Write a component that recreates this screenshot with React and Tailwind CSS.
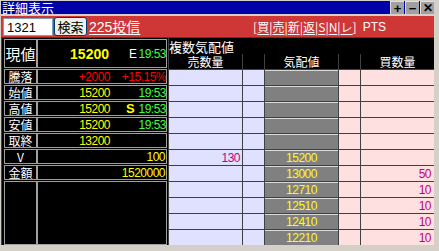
import React from "react";

function Label({ children, big }) {
  return (
    <div
      className={`w-[33px] shrink-0 border border-[#a0a0a0] flex items-center justify-center text-white leading-none font-['Noto_Sans_CJK_JP',sans-serif] ${
        big ? "text-[15px]" : "text-[12px]"
      }`}
    >
      {children}
    </div>
  );
}

function Row({ tall, label, big, children }) {
  return (
    <div className={`flex ${tall ? "h-[29px]" : "h-[15px]"}`}>
      <Label big={big}>{label}</Label>
      <div className="w-[130px] shrink-0 border border-[#a0a0a0] flex items-center text-[12px] tracking-[-0.5px] leading-none font-['Liberation_Sans',sans-serif]">
        {children}
      </div>
    </div>
  );
}

const Y = "text-[#ffff00]";
const G = "text-[#40ff40]";

function BookRow({ sell, price, buy }) {
  return (
    <div className="flex gap-px mt-px h-[15px] text-[12px] tracking-[-0.5px] leading-none font-['Liberation_Sans',sans-serif]">
      <div className="w-[73px] bg-[#e0e0ff] flex items-center justify-end pr-[2px] text-[#c00080]">{sell}</div>
      <div className="w-[21px] bg-[#e0e0ff]" />
      <div className="w-[73px] bg-[#808080] border-t border-[#d8d8d8] flex items-center justify-center text-[#ffff00]">{price}</div>
      <div className="w-[21px] bg-[#ffe0e0]" />
      <div className="w-[73px] bg-[#ffe0e0] flex items-center justify-end pr-[3px] text-[#c00080]">{buy}</div>
    </div>
  );
}

const book = [
  ["", "", ""],
  ["", "", ""],
  ["", "", ""],
  ["", "", ""],
  ["", "", ""],
  ["130", "15200", ""],
  ["", "13000", "50"],
  ["", "12710", "10"],
  ["", "12510", "10"],
  ["", "12410", "10"],
  ["", "12210", "10"],
];

function Link({ children }) {
  return <span className="underline underline-offset-2">{children}</span>;
}

export default function App() {
  return (
    <div className="w-[439px] h-[251px] bg-[#d4d0c8] overflow-hidden font-['Noto_Sans_CJK_JP',sans-serif]">
      <div className="pt-px pl-px w-[434px]">
        {/* title bar */}
        <div className="h-[13px] bg-[#0000a8] flex items-stretch">
          <span className="pl-px self-center text-white text-[13px] leading-none font-['Noto_Sans_CJK_JP',sans-serif]">詳細表示</span>
          <div className="ml-auto flex gap-px">
            <div className="w-[14px] bg-[#a0a0a0] border-t border-l border-[#e0e0e0] flex items-center justify-center text-black font-bold text-[13px] leading-none font-['Liberation_Sans',sans-serif]">+</div>
            <div className="w-[14px] bg-[#a0a0a0] border-t border-l border-[#e0e0e0] flex items-center justify-center text-black font-bold text-[13px] leading-none font-['Liberation_Sans',sans-serif]">−</div>
            <div className="w-[14px] bg-[#a0a0a0] border-t border-l border-[#e0e0e0] flex items-center justify-center text-black font-bold text-[12px] leading-none font-['Liberation_Sans',sans-serif]">✕</div>
          </div>
        </div>
        <div className="h-[2px]" />
        {/* red toolbar */}
        <div className="h-[21px] bg-[#cf3636] flex items-start">
          <div className="ml-[2px] mt-[2px] w-[50px] h-[18px] bg-white border border-[#7f9db9] flex items-center pl-[3px] text-[13px] leading-none text-black font-['Liberation_Sans',sans-serif]">
            1321
          </div>
          <div className="ml-px mt-px w-[33px] h-[19px] bg-[#f0efe6] border border-[#003c74] rounded-[3px] flex items-center justify-center text-[13px] leading-none text-black font-['Noto_Sans_CJK_JP',sans-serif]">
            検索
          </div>
          <span className="ml-[2px] self-center text-white text-[14px] leading-none underline underline-offset-2 font-['Liberation_Sans','Noto_Sans_CJK_JP',sans-serif]">
            225投信
          </span>
          <div className="ml-auto mr-[48px] self-center flex items-center text-white text-[12px] leading-none font-['Noto_Sans_CJK_JP',sans-serif]">
            <span>[</span>
            <Link>買</Link>
            <span>|</span>
            <Link>売</Link>
            <span>|</span>
            <Link>新</Link>
            <span>|</span>
            <Link>返</Link>
            <span>|</span>
            <Link>S</Link>
            <span>|</span>
            <Link>N</Link>
            <span>|</span>
            <Link>レ</Link>
            <span>]</span>
            <span className="ml-[6px] text-[12px] font-['Liberation_Sans',sans-serif]">PTS</span>
          </div>
        </div>
        {/* main */}
        <div className="h-[208px] bg-[#404040] pt-px flex">
          {/* left panel */}
          <div className="ml-px w-[166px] h-full bg-black pt-px pl-[2px] flex flex-col gap-px">
            <Row tall big label="現値">
              <span className="w-[71px] text-right text-[#ffff00] font-bold text-[14px] tracking-normal">15200</span>
              <span className="ml-auto text-white">E</span>
              <span className={`ml-[2px] ${G}`}>19:53</span>
            </Row>
            <Row label="騰落">
              <span className="w-[72px] text-right text-[#ff0000]">+2000</span>
              <span className="ml-auto text-[#ff0000]">+15.15%</span>
            </Row>
            <Row label="始値">
              <span className={`w-[72px] text-right ${Y}`}>15200</span>
              <span className={`ml-auto ${G}`}>19:53</span>
            </Row>
            <Row label="高値">
              <span className={`w-[72px] text-right ${Y}`}>15200</span>
              <span className={`ml-[16px] font-bold text-[13px] ${Y}`}>S</span>
              <span className={`ml-auto ${G}`}>19:53</span>
            </Row>
            <Row label="安値">
              <span className={`w-[72px] text-right ${Y}`}>15200</span>
              <span className={`ml-auto ${G}`}>19:53</span>
            </Row>
            <Row label="取終">
              <span className={`w-[72px] text-right ${Y}`}>13200</span>
            </Row>
            <Row label="V">
              <span className={`ml-auto pr-[1px] ${Y}`}>100</span>
            </Row>
            <Row label="金額">
              <span className={`ml-auto pr-[1px] ${Y}`}>1520000</span>
            </Row>
            <div className="flex h-[64px]">
              <div className="w-[33px] border border-[#a0a0a0]" />
              <div className="w-[130px] border border-[#a0a0a0]" />
            </div>
          </div>
          {/* right panel */}
          <div className="w-[266px] h-full bg-[#404040] pl-px">
            <div className="h-[16px] bg-black flex items-center text-white text-[13px] leading-none font-['Noto_Sans_CJK_JP',sans-serif]">
              複数気配値
            </div>
            <div className="h-[15px] flex gap-px text-white text-[12px] leading-none font-['Noto_Sans_CJK_JP',sans-serif]">
              <div className="w-[73px] bg-black flex items-center justify-center">売数量</div>
              <div className="w-[21px] bg-black" />
              <div className="w-[73px] bg-black flex items-center justify-center">気配値</div>
              <div className="w-[21px] bg-black" />
              <div className="w-[73px] bg-black flex items-center justify-center">買数量</div>
            </div>
            {book.map((r, i) => (
              <BookRow key={i} sell={r[0]} price={r[1]} buy={r[2]} />
            ))}
          </div>
        </div>
      </div>
    </div>
  );
}
